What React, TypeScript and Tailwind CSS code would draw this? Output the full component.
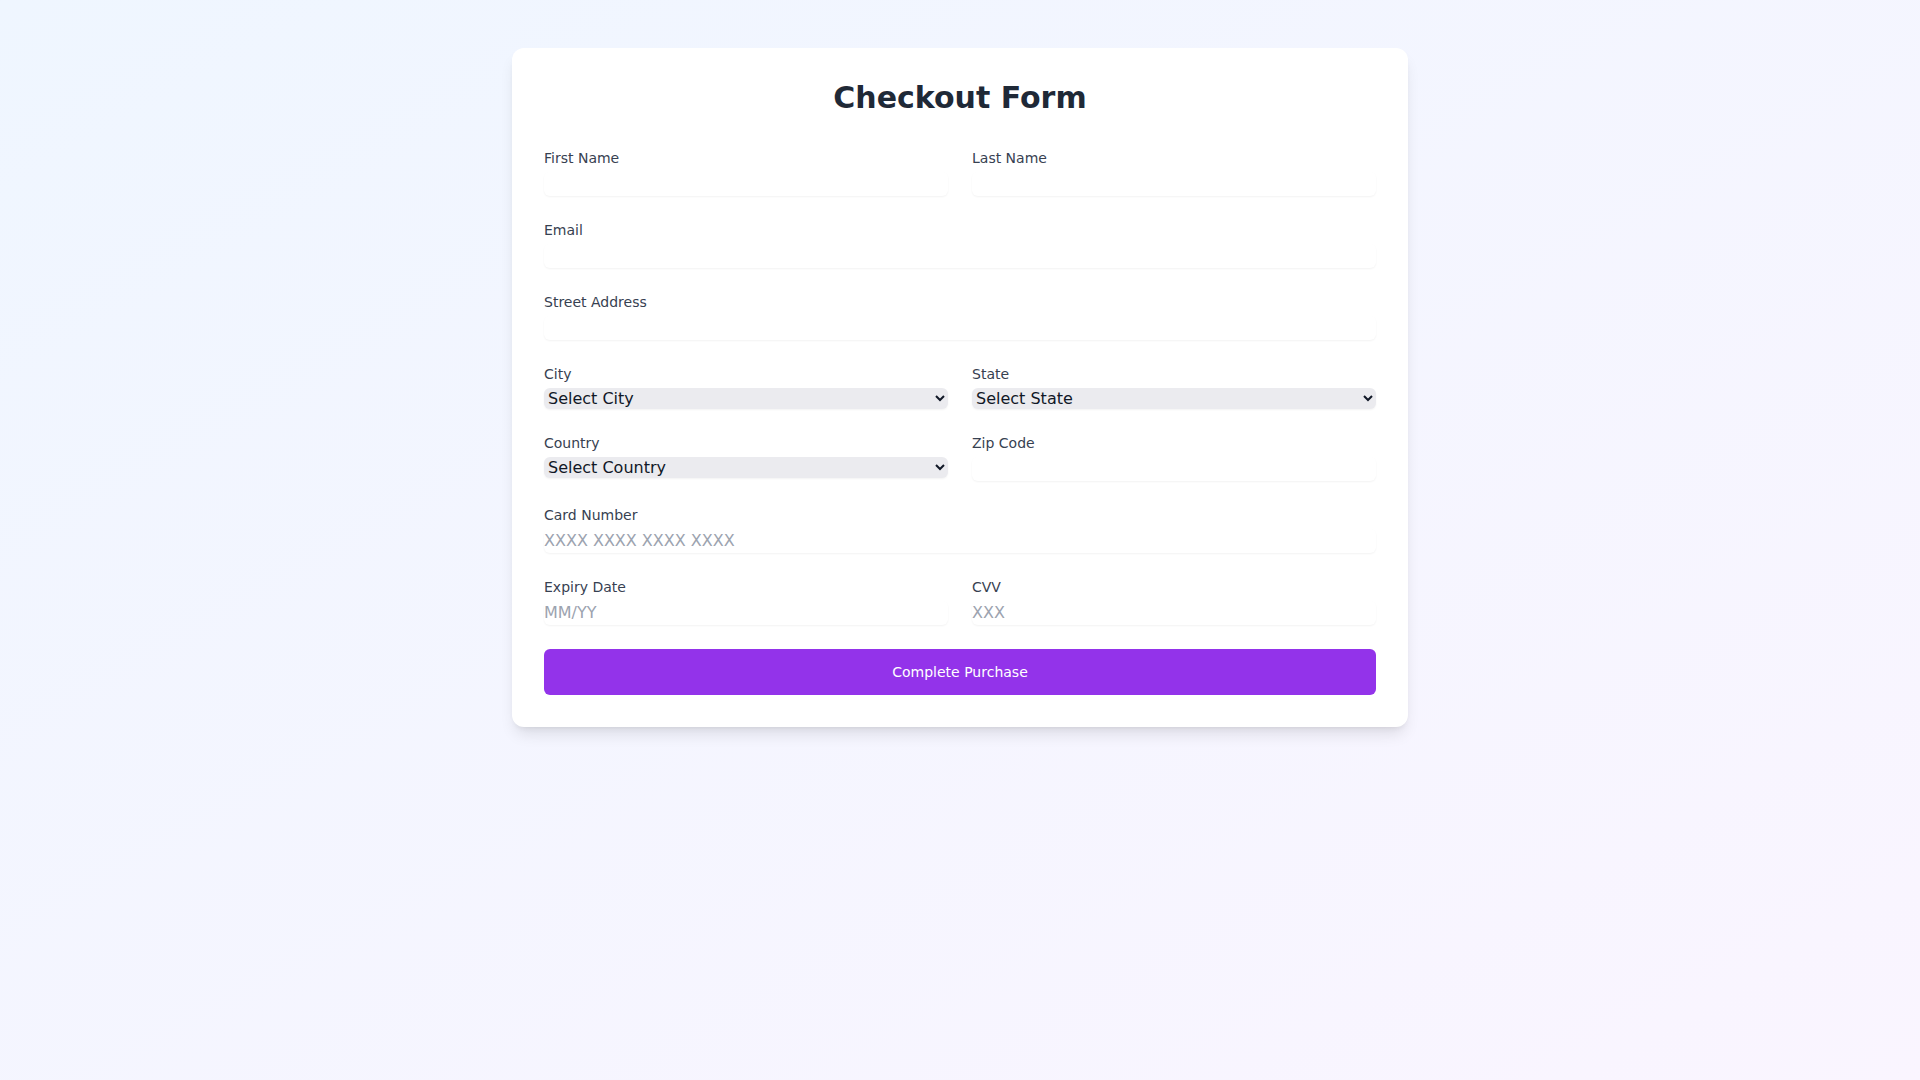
import { useState } from "react";

interface FieldProps {
  label: string;
  name: string;
  placeholder?: string;
  type?: string;
}

function Field({ label, name, placeholder, type = "text" }: FieldProps) {
  return (
    <div>
      <label htmlFor={name} className="block text-sm font-medium text-[#374151]">
        {label}
      </label>
      <input
        id={name}
        name={name}
        type={type}
        placeholder={placeholder}
        className="mt-1 block w-full rounded-md shadow-xs text-base text-[#111827] outline-none placeholder:text-[#9ca3af]"
      />
    </div>
  );
}

interface SelectFieldProps {
  label: string;
  name: string;
  options: string[];
}

function SelectField({ label, name, options }: SelectFieldProps) {
  return (
    <div>
      <label htmlFor={name} className="block text-sm font-medium text-[#374151]">
        {label}
      </label>
      <select
        id={name}
        name={name}
        className="mt-1 block w-full rounded-md bg-[#ebebef] shadow-xs text-base text-[#111827]"
      >
        {options.map((o) => (
          <option key={o}>{o}</option>
        ))}
      </select>
    </div>
  );
}

export default function App() {
  const [submitted, setSubmitted] = useState(false);

  return (
    <div className="min-h-screen bg-gradient-to-br from-[#eff6ff] to-[#faf5ff] py-12 px-4 font-['DejaVu_Sans',sans-serif]">
      <div className="max-w-4xl mx-auto bg-white rounded-xl shadow-lg p-8">
        <h1 className="text-3xl font-bold text-center text-[#1f2937] mb-8">Checkout Form</h1>

        <form
          className="space-y-6"
          onSubmit={(e) => {
            e.preventDefault();
            setSubmitted(!submitted);
          }}
        >
          {/* Name */}
          <div className="grid grid-cols-2 gap-6">
            <Field label="First Name" name="firstName" />
            <Field label="Last Name" name="lastName" />
          </div>

          <Field label="Email" name="email" type="email" />
          <Field label="Street Address" name="address" />

          {/* Location */}
          <div className="grid grid-cols-2 gap-6">
            <SelectField label="City" name="city" options={["Select City", "New York", "Los Angeles", "Chicago"]} />
            <SelectField label="State" name="state" options={["Select State", "NY", "CA", "IL"]} />
          </div>

          <div className="grid grid-cols-2 gap-6">
            <SelectField label="Country" name="country" options={["Select Country", "United States", "Canada"]} />
            <Field label="Zip Code" name="zip" />
          </div>

          {/* Payment */}
          <Field label="Card Number" name="cardNumber" placeholder="XXXX XXXX XXXX XXXX" />

          <div className="grid grid-cols-2 gap-6">
            <Field label="Expiry Date" name="expiry" placeholder="MM/YY" />
            <Field label="CVV" name="cvv" placeholder="XXX" />
          </div>

          <button
            type="submit"
            className="w-full py-[13px] px-4 bg-[#9333ea] text-white text-sm rounded-md hover:bg-[#7e22ce] transition-colors"
          >
            Complete Purchase
          </button>
        </form>
      </div>
    </div>
  );
}
